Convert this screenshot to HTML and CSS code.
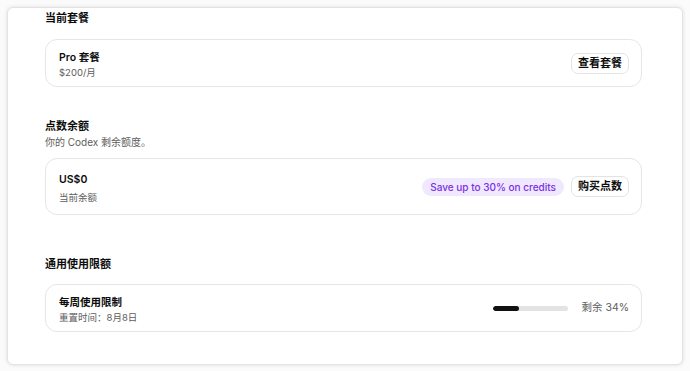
FILE: index.html
```html
<!DOCTYPE html>
<html lang="zh-CN">
<head>
  <meta charset="UTF-8">
  <meta name="viewport" content="width=device-width, initial-scale=1.0">
  <title>设置 - 套餐与用量</title>
  <link rel="stylesheet" href="styles.css">
</head>
<body>
  <div class="panel">
    <!-- 当前套餐 -->
    <section class="section section-plan">
      <h2 class="section-title">当前套餐</h2>
      <div class="card">
        <div class="card-info">
          <div class="card-title">Pro 套餐</div>
          <div class="card-sub">$200/月</div>
        </div>
        <button class="btn">查看套餐</button>
      </div>
    </section>

    <!-- 点数余额 -->
    <section class="section section-credits">
      <h2 class="section-title">点数余额</h2>
      <p class="section-desc">你的 Codex 剩余额度。</p>
      <div class="card card-tall">
        <div class="card-info">
          <div class="card-title">US$0</div>
          <div class="card-sub">当前余额</div>
        </div>
        <div class="card-actions">
          <span class="badge">Save up to 30% on credits</span>
          <button class="btn">购买点数</button>
        </div>
      </div>
    </section>

    <!-- 通用使用限额 -->
    <section class="section section-usage">
      <h2 class="section-title">通用使用限额</h2>
      <div class="card">
        <div class="card-info">
          <div class="card-title">每周使用限制</div>
          <div class="card-sub">重置时间：8月8日</div>
        </div>
        <div class="usage">
          <div class="progress"><div class="progress-fill" style="width: 34%"></div></div>
          <span class="usage-label">剩余 34%</span>
        </div>
      </div>
    </section>
  </div>
</body>
</html>
```

FILE: styles.css
```css
/* Reset base */
* {
  box-sizing: border-box;
  margin: 0;
  padding: 0;
}
body {
  font-family: 'Inter', 'Noto Sans CJK SC', sans-serif;
  background: #fbfbfb;
  color: #0d0d0d;
  padding: 7px;
  width: 690px;
  height: 371px;
  overflow: hidden;
}
/* Pannello principale */
.panel {
  width: 676px;
  height: 358px;
  background: #fff;
  border: 1px solid #e3e3e3;
  border-radius: 6px;
  box-shadow: 0 0 4px rgba(0, 0, 0, 0.12);
  padding: 2px 40px 0 37px;
}
/* Sezioni */
.section-credits { margin-top: 31px; }
.section-usage { margin-top: 41px; }
.section-title {
  font-size: 11px;
  font-weight: 600;
  line-height: 16px;
}
.section-desc {
  font-size: 10px;
  line-height: 16px;
  color: #5d5d5d;
}
.section-plan .card { margin-top: 13px; }
.section-usage .card { margin-top: 12px; }
.section-credits .card { margin-top: 8px; }
/* Card */
.card {
  display: flex;
  align-items: center;
  justify-content: space-between;
  height: 48px;
  border: 1px solid #e6e6e6;
  border-radius: 12px;
  padding: 0 12px 0 13px;
}
.card-tall { height: 57px; }
.card-info { padding-top: 3px; }
.card-title {
  font-size: 10.5px;
  font-weight: 600;
  line-height: 15px;
}
.card-sub {
  font-size: 9.5px;
  line-height: 15px;
  color: #5d5d5d;
}
.card-tall .card-sub { margin-top: 3px; }
/* Azioni */
.card-actions {
  display: flex;
  align-items: center;
  gap: 7px;
}
.btn {
  font-family: inherit;
  font-size: 11px;
  font-weight: 600;
  color: #0d0d0d;
  background: #fff;
  border: 1px solid #e3e3e3;
  border-radius: 7px;
  height: 21px;
  padding: 0 6px;
  line-height: 19px;
}
.badge {
  display: inline-block;
  height: 18px;
  line-height: 18px;
  padding: 0 8px;
  border-radius: 9px;
  background: #f0e8fe;
  color: #7a2fe6;
  font-size: 10px;
  font-weight: 500;
}
/* Barra di utilizzo */
.usage {
  display: flex;
  align-items: center;
  gap: 13px;
}
.progress {
  width: 75px;
  height: 5px;
  border-radius: 3px;
  background: #e3e3e3;
  overflow: hidden;
}
.progress-fill {
  height: 100%;
  background: #111;
  border-radius: 3px;
}
.usage-label {
  font-size: 10.5px;
  color: #5d5d5d;
  line-height: 16px;
}
```
